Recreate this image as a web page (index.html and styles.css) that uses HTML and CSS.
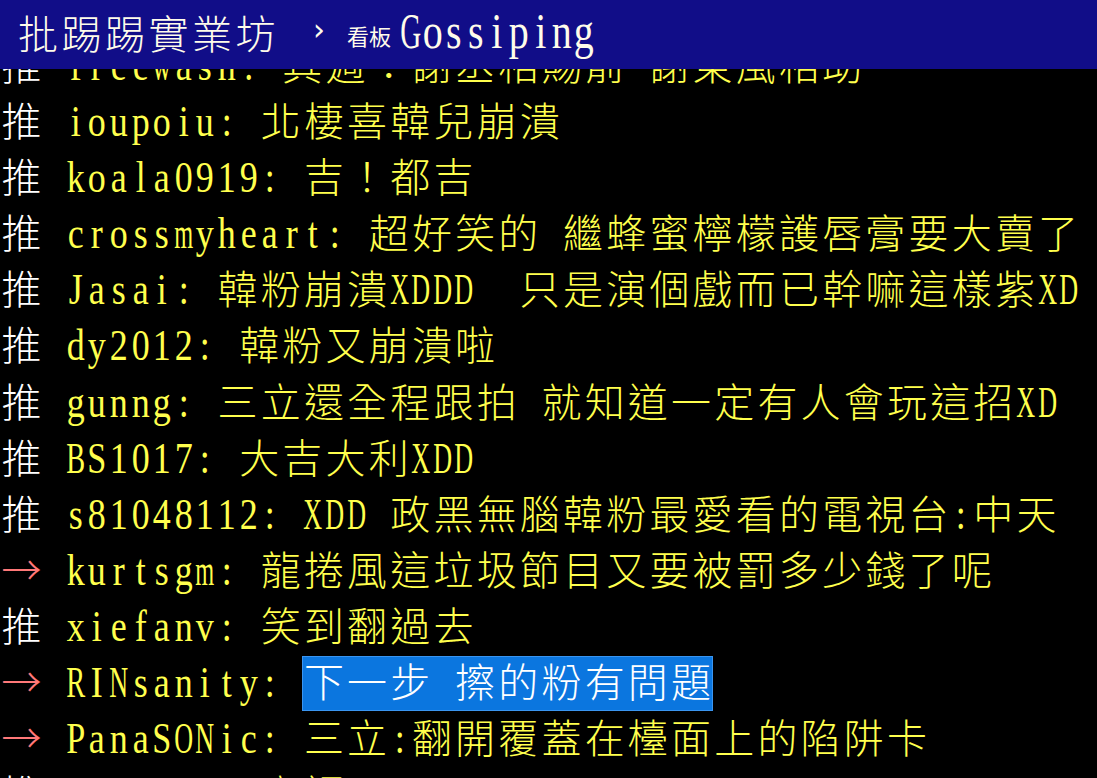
FILE: index.html
```html
<!DOCTYPE html>
<html lang="zh-Hant">
<head>
    <meta charset="UTF-8">
    <meta name="viewport" content="width=device-width, initial-scale=1.0">
    <title>批踢踢實業坊 › 看板 Gossiping</title>
    <link rel="stylesheet" href="styles.css">
</head>
<body>

    <!-- Top bar -->
    <div class="topbar">
        <span class="brand">批踢踢實業坊</span>
        <span class="sep">›</span>
        <span class="board-label">看板</span>
        <span class="board grid">Gossiping</span>
    </div>

    <!-- Terminal rows -->
    <div class="term">
        <div class="row"><span class="grid push">推 </span><span class="grid yel">freewash: 其週：謝丞相賜箭 謝東風相助</span></div>
        <div class="row"><span class="grid push">推 </span><span class="grid yel">ioupoiu: 北棲喜韓兒崩潰</span></div>
        <div class="row"><span class="grid push">推 </span><span class="grid yel">koala0919: 吉！都吉</span></div>
        <div class="row"><span class="grid push">推 </span><span class="grid yel">crossmyheart: 超好笑的 繼蜂蜜檸檬護唇膏要大賣了</span></div>
        <div class="row"><span class="grid push">推 </span><span class="grid yel">Jasai: 韓粉崩潰XDDD  只是演個戲而已幹嘛這樣紫XD</span></div>
        <div class="row"><span class="grid push">推 </span><span class="grid yel">dy2012: 韓粉又崩潰啦</span></div>
        <div class="row"><span class="grid push">推 </span><span class="grid yel">gunng: 三立還全程跟拍 就知道一定有人會玩這招XD</span></div>
        <div class="row"><span class="grid push">推 </span><span class="grid yel">BS1017: 大吉大利XDD</span></div>
        <div class="row"><span class="grid push">推 </span><span class="grid yel">s81048112: XDD 政黑無腦韓粉最愛看的電視台:中天</span></div>
        <div class="row"><span class="grid arrow">→ </span><span class="grid yel">kurtsgm: 龍捲風這垃圾節目又要被罰多少錢了呢</span></div>
        <div class="row"><span class="grid push">推 </span><span class="grid yel">xiefanv: 笑到翻過去</span></div>
        <div class="row"><span class="grid arrow">→ </span><span class="grid yel">RINsanity: </span><span class="grid sel">下一步 擦的粉有問題</span></div>
        <div class="row"><span class="grid arrow">→ </span><span class="grid yel">PanaSONic: 三立:翻開覆蓋在檯面上的陷阱卡</span></div>
        <div class="row"><span class="grid push">推 </span><span class="grid yel">sorrows: 高調</span></div>
    </div>

    <script src="script.js"></script>
</body>
</html>
```

FILE: styles.css
```css
/* Page */
body {
    margin: 0;
    background: #000;
    color: #fff;
    overflow: hidden;
    font-family: "Liberation Serif", "Noto Sans CJK TC", serif;
}

/* Top bar, sits over the first terminal row */
.topbar {
    position: fixed;
    top: 0;
    left: 0;
    right: 0;
    height: 69px;
    z-index: 2;
    box-sizing: border-box;
    padding: 0 0 6px 18px;
    background: #110d88;
    display: flex;
    align-items: center;
    color: #fffcea;
}

.brand {
    font-family: "Noto Sans CJK TC", sans-serif;
    font-size: 40px;
    font-weight: 300;
    letter-spacing: 3.5px;
}

.sep {
    margin-left: 34px;
    font-size: 30px;
    font-family: "DejaVu Sans", sans-serif;
    margin-top: -4px;
}

.board-label {
    margin-left: 22px;
    font-family: "Noto Sans CJK TC", sans-serif;
    font-size: 22px;
    margin-top: 6px;
}

.board {
    margin-left: 9px;
    margin-top: -2px;
}

.board .c {
    font-size: 50px;
}

/* Terminal */
.term {
    padding-top: 39px;
}

.row {
    height: 56.1px;
    line-height: 48px;
    white-space: pre;
}

/* one cell of the grid, filled by script.js */
.c {
    display: inline-flex;
    justify-content: center;
    width: 21.6px;
    font-family: "Liberation Serif", serif;
    font-size: 45px;
}

.c.w {
    width: 43.2px;
    font-family: "Noto Sans CJK TC", sans-serif;
    font-size: 40px;
    font-weight: 300;
}

/* Colours */
.push { color: #ffffff; }
.arrow { color: #ff7878; }
.yel { color: #ffff4d; }

.sel {
    display: inline-block;
    height: 55px;
    background: #0b76df;
    box-shadow: inset 0 0 0 1px #3a95f0;
    color: #ffffff;
}
```

FILE: script.js
```js
// split text into fixed-width cells, like a terminal grid
const HALF_MAX = 19;
const ctx = document.createElement('canvas').getContext('2d');
ctx.font = '45px "Liberation Serif"';

document.querySelectorAll('.grid').forEach(seg => {
    const text = seg.textContent;
    seg.textContent = '';
    for (const ch of text) {
        const cell = document.createElement('span');
        const wide = ch.charCodeAt(0) > 0x2000;
        cell.className = wide ? 'c w' : 'c';
        cell.textContent = ch;
        if (!wide && ch !== ' ') {
            const w = ctx.measureText(ch).width;
            const s = Math.min(0.8, HALF_MAX / w);
            cell.style.transform = 'scaleX(' + s.toFixed(2) + ')';
        }
        seg.appendChild(cell);
    }
});
```
